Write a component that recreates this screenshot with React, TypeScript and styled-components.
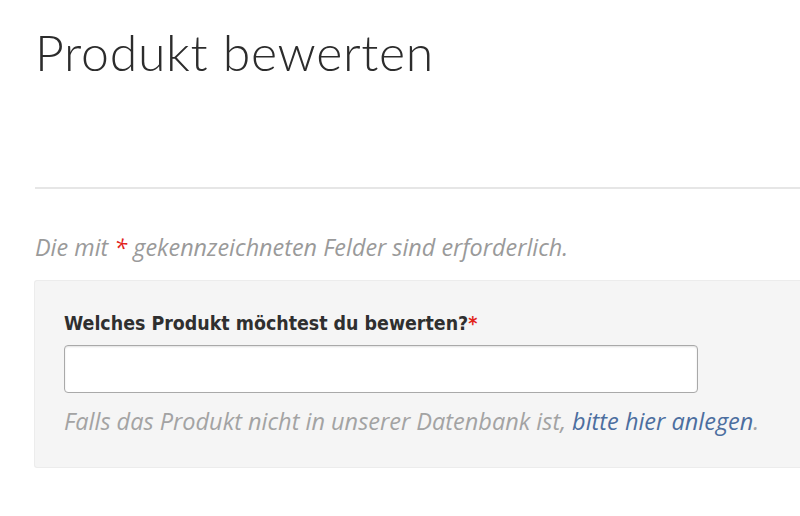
import React from "react";
import styled, { createGlobalStyle } from "styled-components";

const Global = createGlobalStyle`
  html, body { margin: 0; padding: 0; background: #ffffff; }
  body { font-family: "Open Sans", "Lato", sans-serif; color: #333333; overflow: hidden; }
`;

const Page = styled.div`
  width: 800px;
  height: 516px;
  padding: 23px 0 0 35px;
  box-sizing: border-box;
  overflow: hidden;
`;

const Title = styled.h1`
  margin: 0;
  font-family: "Lato", sans-serif;
  font-weight: 300;
  font-size: 50px;
  line-height: 58px;
  color: #2c2c2c;
  letter-spacing: 0.7px;
`;

const Rule = styled.hr`
  margin: 106px 0 0 0;
  border: 0;
  height: 2px;
  background: #e6e6e6;
`;

const Note = styled.p`
  margin: 44px 0 0 0;
  font-family: "Open Sans", sans-serif;
  font-style: italic;
  font-size: 23.4px;
  line-height: 28px;
  color: #9a9a9a;
`;

const Required = styled.span`
  color: #e2231a;
`;

const Panel = styled.section`
  margin: 19px 0 0 -1px;
  background: #f5f5f5;
  border: 1px solid #ececec;
  border-right: 0;
  border-radius: 3px 0 0 3px;
  padding: 31px 0 32px 29px;
`;

const Label = styled.label`
  display: block;
  font-family: "DejaVu Sans Condensed", sans-serif;
  font-weight: 700;
  font-size: 19.4px;
  line-height: 24px;
  color: #2f2f2f;
`;

const Input = styled.input`
  display: block;
  margin-top: 9px;
  width: 634px;
  height: 48px;
  box-sizing: border-box;
  border: 1px solid #a9a9a9;
  border-radius: 4px;
  background: #ffffff;
  box-shadow: inset 0 1px 2px rgba(0,0,0,0.12);
`;

const Help = styled.p`
  margin: 14px 0 0 0;
  font-family: "Open Sans", sans-serif;
  font-style: italic;
  font-size: 23.5px;
  line-height: 28px;
  color: #a3a3a3;
`;

const Link = styled.a`
  color: #4c6e9f;
  text-decoration: none;
`;

export default function App() {
  return (
    <>
      <Global />
      <Page>
        <Title>Produkt bewerten</Title>
        <Rule />
        <Note>
          Die mit <Required>*</Required> gekennzeichneten Felder sind erforderlich.
        </Note>
        <Panel>
          <Label>
            Welches Produkt möchtest du bewerten?<Required>*</Required>
          </Label>
          <Input type="text" />
          <Help>
            Falls das Produkt nicht in unserer Datenbank ist, <Link href="#">bitte hier anlegen</Link>.
          </Help>
        </Panel>
      </Page>
    </>
  );
}
